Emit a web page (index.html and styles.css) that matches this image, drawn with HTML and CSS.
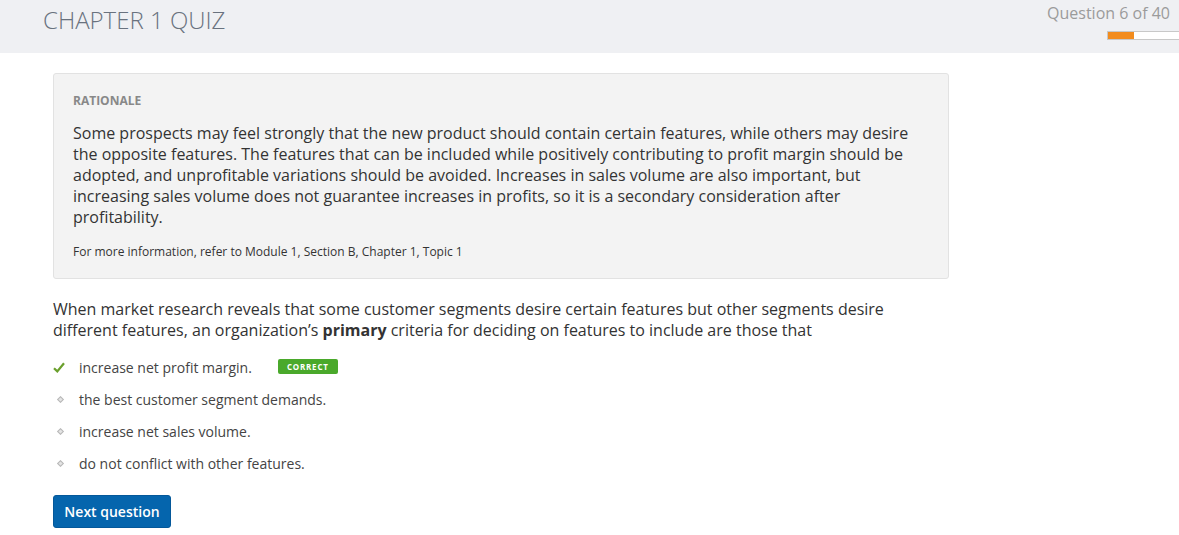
FILE: index.html
```html
<!DOCTYPE html>
<html>
<head>
<meta charset="utf-8">
<link rel="stylesheet" href="styles.css">
</head>
<body>
<header class="topbar">
  <h1 class="title">CHAPTER 1 QUIZ</h1>
  <div class="progress-wrap">
    <div class="qcount">Question 6 of 40</div>
    <div class="progress"><div class="progress-fill" style="width:26px"></div></div>
  </div>
</header>
<main class="content">
  <section class="rationale">
    <div class="rat-label">RATIONALE</div>
    <p class="rat-text">Some prospects may feel strongly that the new product should contain certain features, while others may desire the opposite features. The features that can be included while positively contributing to profit margin should be adopted, and unprofitable variations should be avoided. Increases in sales volume are also important, but increasing sales volume does not guarantee increases in profits, so it is a secondary consideration after profitability.</p>
    <p class="rat-ref">For more information, refer to Module 1, Section B, Chapter 1, Topic 1</p>
  </section>
  <p class="question">When market research reveals that some customer segments desire certain features but other segments desire different features, an organization’s <b>primary</b> criteria for deciding on features to include are those that</p>
  <ul class="options">
    <li class="opt">
      <span class="marker"><svg width="12" height="11" viewBox="0 0 12 11"><path d="M1 6.2 L4.3 9.4 L11 1.2" fill="none" stroke="#6a9f2c" stroke-width="2.2"/></svg></span>
      <span class="opt-text">increase net profit margin.</span>
      <span class="badge">CORRECT</span>
    </li>
    <li class="opt"><span class="marker"><span class="diamond"></span></span><span class="opt-text">the best customer segment demands.</span></li>
    <li class="opt"><span class="marker"><span class="diamond"></span></span><span class="opt-text">increase net sales volume.</span></li>
    <li class="opt"><span class="marker"><span class="diamond"></span></span><span class="opt-text">do not conflict with other features.</span></li>
  </ul>
  <button class="next-btn">Next question</button>
</main>
</body>
</html>
```
FILE: styles.css
```css
* { box-sizing: border-box; }
html, body { margin: 0; padding: 0; }
body {
  font-family: "Open Sans", "Liberation Sans", sans-serif;
  color: #333;
  background: #fff;
  width: 1179px;
  height: 535px;
  overflow: hidden;
}
.topbar {
  height: 53px;
  background: #eff0f3;
  display: flex;
  justify-content: space-between;
  align-items: flex-start;
}
.title {
  margin: 0;
  padding: 4px 0 0 43px;
  font-weight: 300;
  font-size: 24px;
  line-height: 32px;
  color: #69727e;
}
.progress-wrap {
  display: flex;
  flex-direction: column;
  align-items: flex-end;
  padding-top: 3px;
}
.qcount {
  font-size: 16px;
  line-height: 20px;
  color: #9b9b9b;
  padding-right: 9px;
}
.progress {
  margin-top: 8px;
  width: 72px;
  height: 9px;
  background: #fff;
  border: 1px solid #c8c8c8;
  border-right: none;
  display: flex;
}
.progress-fill {
  background: #f28c1e;
  height: 100%;
}
.content {
  padding: 20px 0 0 53px;
}
.rationale {
  width: 896px;
  background: #f3f3f3;
  border: 1px solid #e2e2e2;
  border-radius: 3px;
  padding: 18px 20px 18px 19px;
}
.rat-label {
  font-size: 12px;
  font-weight: 700;
  color: #888;
  line-height: 17px;
}
.rat-text {
  margin: 14px 0 0 0;
  font-size: 16px;
  line-height: 21px;
  color: #333;
}
.rat-ref {
  margin: 15px 0 0 0;
  font-size: 12px;
  line-height: 17px;
  color: #333;
}
.question {
  margin: 20px 0 0 0;
  width: 860px;
  font-size: 16px;
  line-height: 21px;
  color: #333;
}
.question b { font-weight: 700; }
.options {
  list-style: none;
  margin: 10px 0 0 0;
  padding: 0;
}
.opt {
  display: flex;
  align-items: center;
  height: 32px;
  font-size: 14px;
  color: #444;
}
.marker {
  width: 26px;
  display: flex;
  align-items: center;
  justify-content: flex-start;
}
.diamond {
  display: block;
  width: 5px;
  height: 5px;
  margin-left: 5px;
  background: #e4e4e4;
  border: 1px solid #b8b8b8;
  transform: rotate(45deg);
}
.badge {
  margin-left: 26px;
  margin-top: -2px;
  background: #4aa92b;
  color: #fff;
  font-size: 8px;
  font-weight: 700;
  letter-spacing: 0.8px;
  line-height: 15px;
  padding: 0 9px;
  border-radius: 2px;
}
.next-btn {
  display: block;
  margin-top: 16px;
  font-family: "Open Sans", "Liberation Sans", sans-serif;
  font-size: 14px;
  font-weight: 600;
  color: #fff;
  background: #0565ad;
  border: 1px solid #04589a;
  border-radius: 3px;
  height: 33px;
  width: 118px;
  padding: 0;
  text-align: center;
}
```
